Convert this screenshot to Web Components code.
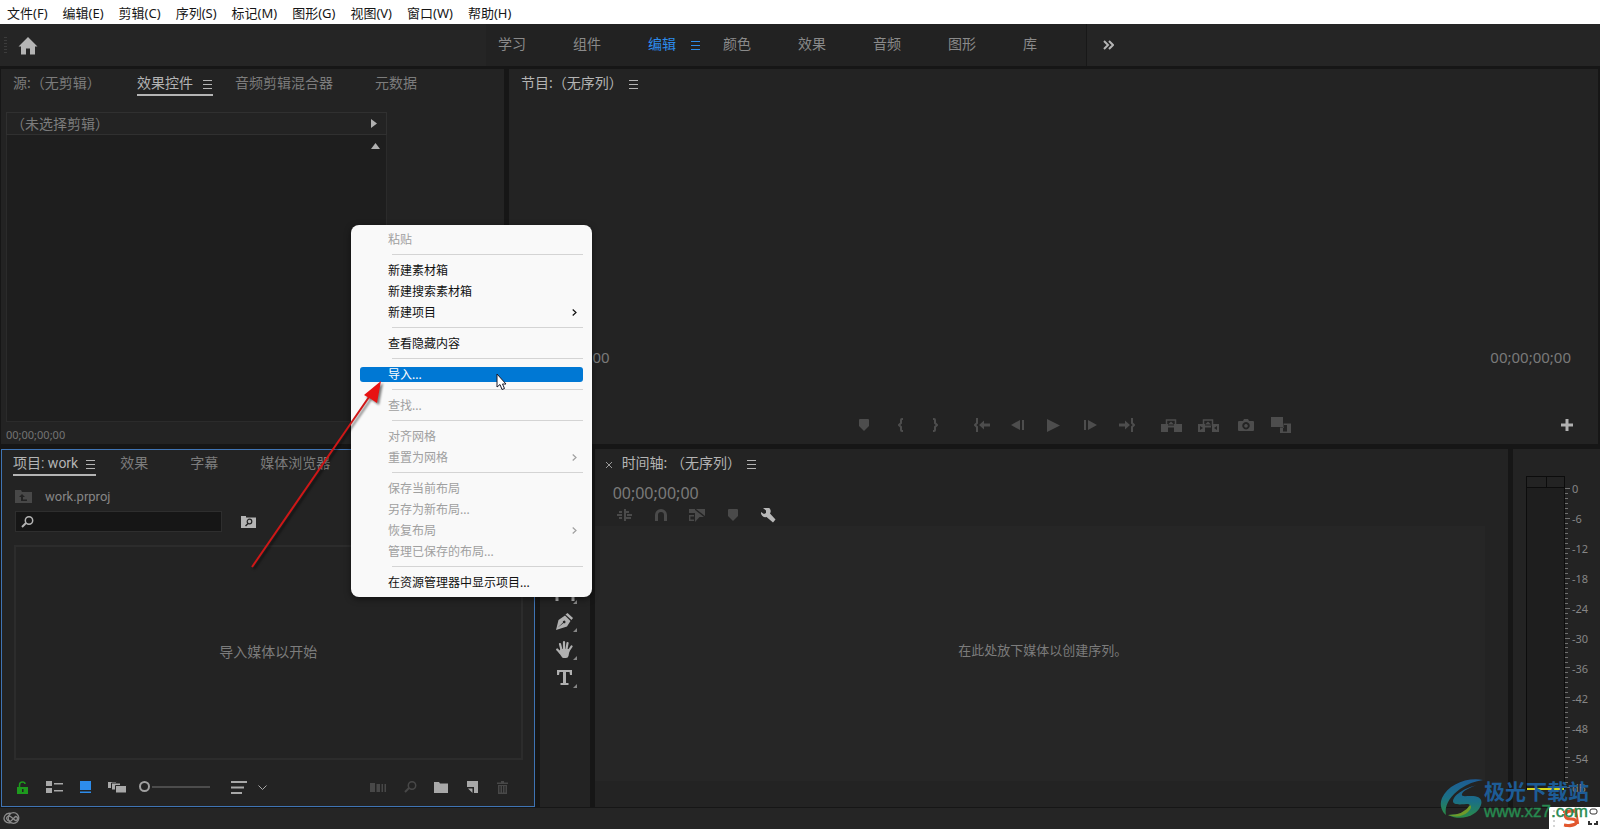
<!DOCTYPE html>
<html lang="zh-CN">
<head>
<meta charset="utf-8">
<title>work.prproj</title>
<style>
html,body{margin:0;height:100%;background:#161616;overflow:hidden}
body{font-family:"Noto Sans","Noto Sans CJK SC",sans-serif;font-size:14px;color:#868686}
</style>
</head>
<body>
<pr-app></pr-app>
<script>
const BASE = `*{box-sizing:border-box}
button{font:inherit;color:inherit;background:none;border:0;padding:0;margin:0;cursor:default;white-space:nowrap}
p{margin:0}`;
function define(name, css, html, setup){
  const t = document.createElement('template');
  t.innerHTML = `<style>${BASE}${css}</style>${html}`;
  customElements.define(name, class extends HTMLElement{
    constructor(){ super(); this.attachShadow({mode:'open'}).append(t.content.cloneNode(true)); }
    connectedCallback(){ if(setup && !this.ready){ this.ready = true; setup(this, this.shadowRoot); } }
  });
}

/* name: [width, height, markup] */
const ICONS = {
  home:[20,18,'<path d="M10 0 19.500 9.500H17V17.500H12V11.500H8V17.500H3V9.500H.5Z"/>'],
  ham:[9,9,'<path d="M0 0h9v1H0zM0 4h9v1H0zM0 8h9v1H0z"/>'],
  more:[11,10,'<path d="M1 1l4 4-4 4M6 1l4 4-4 4" fill="none" stroke="currentColor" stroke-width="2"/>'],
  right:[6,9,'<path d="M0 0 6 4.500 0 9Z"/>'],
  up:[9,6,'<path d="M0 6 4.500 0 9 6Z"/>'],
  marker:[10,12,'<path d="M0 1q0-1 1-1h8q1 0 1 1v6l-5 5-5-5z"/>'],
  inb:[6,14,'<path d="M5 1H4Q3 1 3 2V5L1 7 3 9V12Q3 13 4 13H5" fill="none" stroke="currentColor" stroke-width="2"/>'],
  outb:[6,14,'<path d="M1 1H2Q3 1 3 2V5L5 7 3 9V12Q3 13 2 13H1" fill="none" stroke="currentColor" stroke-width="2"/>'],
  goin:[16,14,'<path d="M4 1H3V5L1 7 3 9V13H4" fill="none" stroke="currentColor" stroke-width="2"/><path d="M5 7l5-4.500V5.500h6v3h-6v3z"/>'],
  goout:[16,14,'<path d="M12 1h1V5l2 2-2 2v4h-1" fill="none" stroke="currentColor" stroke-width="2"/><path d="M11 7 6 2.500V5.500H0v3h6v3z"/>'],
  back:[14,10,'<path d="M0 5 9 0v10zM11 0h2v10h-2z"/>'],
  fwd:[14,10,'<path d="M0 0h2v10H0zM4 0l9 5-9 5z"/>'],
  play:[13,13,'<path d="M0 0 13 6.500 0 13Z"/>'],
  lift:[21,13,'<path d="M0 5h7v8H0zM13 5h8v8h-8z"/><path d="M5.500 7V1h9v6" fill="none" stroke="currentColor" stroke-width="1.500"/><path d="M7 5.500 10 2.500l3 3zM7 6.500h6v2H7z"/>'],
  extract:[21,13,'<path fill-rule="evenodd" d="M0 5h7v8H0zM2 7v4l3-2zM14 5h7v8h-7zM19 7v4l-3-2z"/><path d="M5.500 7V1h9v6" fill="none" stroke="currentColor" stroke-width="1.500"/><path d="M7 5.500 10 2.500l3 3zM7 6.500h6v2H7z"/>'],
  camera:[16,12,'<path fill-rule="evenodd" d="M1 2h4l1-2h4l1 2h4q1 0 1 1v8q0 1-1 1H1q-1 0-1-1V3q0-1 1-1zM8 3a3.700 3.700 0 1 0 .01 0zM8 5a1.800 1.800 0 1 1-.01 0z"/>'],
  compare:[21,16,'<path d="M0 0h12v10H0z"/><path fill-rule="evenodd" d="M9 10.500h3.500V6.500H20V16H9zM12 11v3.500h4V8h-3v3z"/>'],
  plus:[12,12,'<path d="M4.500 0h3v4.500H12v3H7.500V12h-3V7.500H0v-3h4.500z"/>'],
  folderup:[17,13,'<path fill-rule="evenodd" d="M0 0h6l1 2h10v11H0zM7 4 4 7h2v4h6V9.500H8V7h2z"/>'],
  search:[13,12,'<circle cx="8" cy="4.500" r="3.700" fill="none" stroke="currentColor" stroke-width="1.500"/><path d="M5 7 1 11" stroke="currentColor" stroke-width="2"/>'],
  foldersearch:[15,12,'<path fill-rule="evenodd" d="M0 0h5v1.500h10V12H0z"/><circle cx="8.500" cy="5.500" r="2.300" fill="none" stroke="#222" stroke-width="1.200"/><path d="M7 7.500 4.500 10" stroke="#222" stroke-width="1.500"/>'],
  lock:[11,13,'<path fill-rule="evenodd" d="M0 6h11v7H0zM5 8v3h1.500V8z"/><path d="M2.500 6V4q0-3 3-3Q8 1 8 3" fill="none" stroke="currentColor" stroke-width="1.500"/>'],
  list:[17,12,'<path d="M0 0h6v5H0zM0 7h6v5H0zM8 2h9v1.500H8zM8 9h9v1.500H8z"/>'],
  iconview:[11,12,'<path d="M0 0h11v9H0zM0 10.500h11V12H0z"/>'],
  free:[20,12,'<g stroke="#232323"><path d="M.5.5h9v7h-9z"/><path d="M4.500 2h9v7h-9z"/><path d="M8.500 4.500h11V12h-11z"/></g>'],
  sort:[16,13,'<path d="M0 0h16v2H0zM0 5.500h13v2H0zM0 11h11v2H0z"/>'],
  down:[9,5,'<path d="M.5.5l4 4 4-4" fill="none" stroke="currentColor"/>'],
  auto:[16,9,'<path d="M0 0h5v9H0zM6.500 1H10v8H6.500zM11.500 1H13v8h-1.500zM14.500 1H16v8h-1.500z"/>'],
  folder:[14,11,'<path d="M0 0h5l1 1.500h8V11H0z"/>'],
  newitem:[11,12,'<path d="M0 0h11v12H7V6H0z"/><path d="M1 7.500h4.500V12z"/>'],
  trash:[11,13,'<path fill-rule="evenodd" d="M4 0h3v1.500h4V3H0V1.500h4zM1 4h9v9H1zM2.500 5v6.500H3.500V5zM5 5v6.500h1V5zM7.500 5v6.500h1V5z"/>'],
  snap:[15,12,'<path d="M0 5h5v2H0zM2 2h3v2H2zM2 8h3v2H2zM7 0h2v12H7zM10 5h5v2h-5zM9 2h3v2H9zM9 8h5v2H9z"/>'],
  magnet:[12,13,'<path d="M1.500 12V6a4.500 4.500 0 0 1 9 0v6" fill="none" stroke="currentColor" stroke-width="3"/>'],
  linked:[16,13,'<path d="M0 0h6v4H0zM7 0h9v7z"/><path d="M5 6.700H.7v4.600H5" fill="none" stroke="currentColor" stroke-width="1.400"/><path d="M6 1l9 7h-4.500L6 13z"/>'],
  wrench:[15,15,'<path d="M2 0a4.500 4.500 0 0 1 7 5.500l5.500 6-2.500 3L5.500 9A4.500 4.500 0 0 1 0 4l3 2 2-1V2.500z"/>'],
  close:[6,6,'<path d="M0 0l6 6M6 0 0 6" stroke="currentColor"/>'],
  rect:[20,20,'<path d="M2 18v-4M18 18v-4" fill="none" stroke="currentColor" stroke-width="3"/>'],
  pen:[18,17,'<path fill-rule="evenodd" d="M0 17 2.500 7 9 2.500 14.500 8 11 13.500zM1.500 14.700 7 9.500a1.300 1.300 0 1 1 .6.6z"/><path d="M9.500 1.500 11.500 0 17 5l-1.500 2z"/>'],
  hand:[17,17,'<g fill="none" stroke="currentColor" stroke-linecap="round" stroke-width="2.200"><path d="M5.500 9 4 3M8 8V1.200M10.500 8l1-5.800M12.500 10 15.500 5.500M4.500 12 1.200 8.500"/></g><path d="M4.500 8h8.300l.7 2-1 5q-.5 2-2.500 2H7.500q-1 0-2-1.500L2.500 11z"/>'],
  type:[15,15,'<path d="M0 0h15v5h-2L12.500 2H9v11h2.500v2h-8v-2H6V2H2.500L2 5H0z"/>'],
  cc:[17,12,'<g fill="none" stroke="currentColor" stroke-width="1.300"><circle cx="10.500" cy="6" r="5.300"/><path d="M8 1.500Q4 .5 2 3.500t0 5.500q2 2.500 6 1.500"/><path d="M3.500 6.500a2.500 2.500 0 0 1 4-2l5 4a2 2 0 1 0 0-4L8 9q-3 1-4.500-2.500"/></g>'],
  chev:[5,7,'<path d="M.7.5 4 3.500.7 6.500" fill="none" stroke="currentColor" stroke-width="1.200"/>']
};
customElements.define('pr-icon', class extends HTMLElement{
  constructor(){ super(); this.attachShadow({mode:'open'}); }
  connectedCallback(){
    const [w,h,m] = ICONS[this.getAttribute('name')];
    this.shadowRoot.innerHTML = `<style>:host{display:block;flex:none}svg{display:block}</style><svg width="${w}" height="${h}" viewBox="0 0 ${w} ${h}" fill="currentColor" aria-hidden="true">${m}</svg>`;
  }
});

define('pr-menubar', `:host{display:block;background:#fff;color:#161616;font-size:13px}
nav{display:flex;gap:15px;padding:0 7px;height:24px;align-items:center}
button{line-height:20px;padding-top:2px}`,
`<nav></nav>`, (el, r) => {
  r.querySelector('nav').innerHTML = ['文件(F)','编辑(E)','剪辑(C)','序列(S)','标记(M)','图形(G)','视图(V)','窗口(W)','帮助(H)'].map(t=>`<button>${t}</button>`).join('');
});

define('pr-workspaces', `:host{display:flex;height:42px;background:#252525;align-items:center}
.grip{width:3px;height:16px;margin-left:4px;background:repeating-linear-gradient(#3c3c3c 0 1px,transparent 1px 3px)}
.home{color:#b4b4b4;margin-left:11px;padding-top:1px}
.tabs{display:grid;grid-template-columns:repeat(7,75px) 63px;margin-left:448px;padding-left:12px;height:42px;background:#222;border-right:1px solid #181818}
.tabs button{text-align:left;padding-bottom:4px;color:#8a8a8a;display:flex;align-items:center;gap:15px}
.tabs .on{color:#2d8ceb}
.tabs pr-icon{padding-top:4px}
.more{color:#b4b4b4;margin-left:16px}`,
`<span class="grip"></span><button class="home" aria-label="主页"><pr-icon name="home"></pr-icon></button>
<div class="tabs"><button>学习</button><button>组件</button><button class="on">编辑<pr-icon name="ham"></pr-icon></button><button>颜色</button><button>效果</button><button>音频</button><button>图形</button><button>库</button></div>
<button class="more" aria-label="更多"><pr-icon name="more"></pr-icon></button>`);

define('pr-panel', `:host{display:flex;flex-direction:column;background:#232323;min-width:0;min-height:0;overflow:hidden}
:host([active]){border:1px solid #3f74b4}
header{display:flex;height:32px;align-items:flex-start;flex:none}
`, `<header><slot name="tab"></slot></header><slot></slot>`);

define('pr-tab', `:host{display:block;flex:none;color:#7c7c7c}
button{display:flex;align-items:center;height:24px;line-height:20px;gap:var(--tab-gap,10px);padding:1px 1px 1px 0;border-bottom:2px solid transparent}
pr-icon{visibility:hidden;padding-top:2px}
:host([on]){color:#b4b4b4}
:host([on]) pr-icon{visibility:visible}
:host([line]) button{border-color:#b4b4b4}
:host([bare]) pr-icon{display:none}`,
`<button role="tab"><slot></slot><pr-icon name="ham"></pr-icon></button>`);

define('pr-effects', `:host{display:flex;min-height:0;min-width:0}
pr-panel{flex:1}
pr-tab{margin:3px 22px 0 0}
pr-tab:first-of-type{margin-left:12px;width:102px}
.body{display:flex;flex-direction:column;flex:1;margin:11px 117px 0 5px}
.clip{height:23px;border:1px solid #303030;display:flex;align-items:center;justify-content:space-between;padding:0 9px 0 4px}
.clip p{color:#7c7c7c;padding-bottom:2px}.clip pr-icon,.well pr-icon{color:#b0b0b0}
.well{flex:1;background:#1e1e1e;border:1px solid #2b2b2b;border-top:0;padding:8px 6px;display:flex;justify-content:flex-end}
.time{font-size:11px;line-height:18px;padding:4px 0 0 5px;color:#747474}`,
`<pr-panel><pr-tab slot="tab" bare>源:（无剪辑）</pr-tab><pr-tab slot="tab" on line>效果控件</pr-tab><pr-tab slot="tab">音频剪辑混合器</pr-tab><pr-tab slot="tab">元数据</pr-tab>
<div class="body"><div class="clip"><p>（未选择剪辑）</p><pr-icon name="right"></pr-icon></div><div class="well"><pr-icon name="up"></pr-icon></div></div>
<p class="time">00;00;00;00</p></pr-panel>`);

define('pr-program', `:host{display:flex;min-height:0;min-width:0;--tab-gap:6px}
pr-panel{flex:1}pr-tab{margin:3px 0 0 12px}
.view{flex:1}
.times{display:flex;justify-content:space-between;padding:0 27px 0 20px;font-size:15px;line-height:20px;color:#7a7a7a}
.bar{display:grid;grid-template-columns:1fr auto 1fr;align-items:center;height:77px;padding:48px 25px 9px 0;color:#4d4d4d}
.icons{display:grid;grid-template-columns:36px 38px 30px 64px 8px 64px 10px 62px 28px 46px 28px 44px;justify-items:center;align-items:center;margin-left:67px}
.plus{justify-self:end;color:#b0b0b0}`,
`<pr-panel><pr-tab slot="tab" on>节目:（无序列）</pr-tab><div class="view"></div>
<div class="times"><span>00;00;00;00</span><span>00;00;00;00</span></div>
<div class="bar"><span></span><div class="icons"></div><button class="plus" aria-label="按钮编辑器"><pr-icon name="plus"></pr-icon></button></div></pr-panel>`,
(el, r) => {
  r.querySelector('.icons').innerHTML = [['marker','添加标记'],['inb','标记入点'],['outb','标记出点'],['goin','转到入点'],['back','后退一帧'],['play','播放'],['fwd','前进一帧'],['goout','转到出点'],['lift','提升'],['extract','提取'],['camera','导出帧'],['compare','比较视图']].map(([n,l])=>`<button aria-label="${l}"><pr-icon name="${n}"></pr-icon></button>`).join('');
});

define('pr-project', `:host{display:flex;min-height:0;min-width:0;--tab-gap:8px}
pr-panel{flex:1}pr-tab{margin:2px 24px 0 0;font-family:Roboto,"Noto Sans CJK SC",sans-serif}pr-tab:first-of-type{margin-left:11px}
.path{display:flex;align-items:center;gap:13px;padding-left:13px;height:26px;font:13px Roboto,sans-serif;color:#868686;margin-top:1px}
.path pr-icon{color:#484848}
.find{display:flex;align-items:center;gap:19px;padding-left:13px;height:25px;color:#b4b4b4}
.find label{display:flex;align-items:center;width:207px;height:21px;background:#161616;border:1px solid #2e2e2e;padding-left:5px}
.find input{flex:1;min-width:0;background:none;border:0;outline:0;color:#b4b4b4}
.drop{flex:1;border:2px solid #2c2c2c;margin:11px 11px 0 12px;display:flex;align-items:center;justify-content:center;color:#7c7c7c}
.drop p{padding-bottom:3px}
.tools{display:flex;align-items:center;height:46px;padding:8px 26px 0 15px;color:#a8a8a8}
.tools button,.tools input{flex:none}
.lock{color:#1e9a1e;margin-right:18px}.l{margin-right:17px}.v{color:#2d8ceb;margin-right:16px}.f{margin-right:12px}.s{margin:0 11px 0 21px}.sp{flex:1}
.dim{color:#484848}.fo{margin:0 19px 0 17px}.a{margin-right:18px}.n{margin-right:19px}
input[type=range]{appearance:none;background:none;width:71px;height:13px;margin:0}
input[type=range]::-webkit-slider-runnable-track{height:2px;background:linear-gradient(90deg,transparent 13px,#4c4c4c 13px)}
input[type=range]::-webkit-slider-thumb{appearance:none;width:11px;height:11px;margin-top:-5px;border:2px solid #a0a0a0;border-radius:50%;background:#232323}`,
`<pr-panel active><pr-tab slot="tab" on line>项目: work</pr-tab><pr-tab slot="tab">效果</pr-tab><pr-tab slot="tab">字幕</pr-tab><pr-tab slot="tab">媒体浏览器</pr-tab>
<div class="path"><pr-icon name="folderup"></pr-icon><span>work.prproj</span></div>
<div class="find"><label><pr-icon name="search"></pr-icon><input type="text" aria-label="搜索"></label><button aria-label="搜索素材箱"><pr-icon name="foldersearch"></pr-icon></button></div>
<div class="drop"><p>导入媒体以开始</p></div>
<div class="tools"><button class="lock" aria-label="锁定"><pr-icon name="lock"></pr-icon></button><button class="l" aria-label="列表视图"><pr-icon name="list"></pr-icon></button><button class="v" aria-label="图标视图"><pr-icon name="iconview"></pr-icon></button><button class="f" aria-label="自由视图"><pr-icon name="free"></pr-icon></button><input type="range" value="0" aria-label="缩放"><button class="s" aria-label="排序"><pr-icon name="sort"></pr-icon></button><button aria-label="排序选项"><pr-icon name="down"></pr-icon></button><span class="sp"></span><button class="dim a" aria-label="自动匹配序列"><pr-icon name="auto"></pr-icon></button><button class="dim" aria-label="查找"><pr-icon name="search"></pr-icon></button><button class="fo" aria-label="新建素材箱"><pr-icon name="folder"></pr-icon></button><button class="n" aria-label="新建项"><pr-icon name="newitem"></pr-icon></button><button class="dim" aria-label="清除"><pr-icon name="trash"></pr-icon></button></div></pr-panel>`);

define('pr-tools', `:host{display:flex;flex-direction:column;align-items:center;background:#232323;padding-top:130px;color:#b0b0b0;overflow:hidden}
button{width:24px;height:28px;flex:none;display:grid;place-items:center;position:relative}
button::after{content:"";position:absolute;right:0;bottom:3px;border:2px solid;border-color:transparent currentColor currentColor transparent;opacity:.7}`,
`<button aria-label="矩形工具"><pr-icon name="rect"></pr-icon></button><button aria-label="钢笔工具"><pr-icon name="pen"></pr-icon></button><button aria-label="手形工具"><pr-icon name="hand"></pr-icon></button><button aria-label="文字工具"><pr-icon name="type"></pr-icon></button>`);

define('pr-timeline', `:host{display:flex;min-height:0;min-width:0;--tab-gap:6px}
pr-panel{flex:1}.x{color:#9a9a9a;padding:13px 10px 0 11px}pr-tab{margin-top:3px}
.time{font-size:16px;line-height:22px;color:#7a7a7a;padding:1px 0 0 18px}
.icons{display:grid;grid-template-columns:repeat(5,36px);justify-items:center;align-items:center;height:22px;padding-left:12px;color:#4a4a4a}
.w{color:#b8b8b8}
.track{flex:1;display:flex;align-items:center;justify-content:center;margin:0 23px 26px 0;padding:0 0 8px 6px;background:#262626;color:#7c7c7c;font-size:13px}`,
`<pr-panel><button class="x" slot="tab" aria-label="关闭"><pr-icon name="close"></pr-icon></button><pr-tab slot="tab" on>时间轴: （无序列）</pr-tab>
<p class="time">00;00;00;00</p>
<div class="icons"><button aria-label="插入嵌套"><pr-icon name="snap"></pr-icon></button><button aria-label="对齐"><pr-icon name="magnet"></pr-icon></button><button aria-label="链接选择"><pr-icon name="linked"></pr-icon></button><button aria-label="标记"><pr-icon name="marker"></pr-icon></button><button class="w" aria-label="设置"><pr-icon name="wrench"></pr-icon></button></div>
<div class="track"><p>在此处放下媒体以创建序列。</p></div></pr-panel>`);

define('pr-meters', `:host{display:flex;background:#232323;padding:24px 0 4px 13px;font-size:11px;color:#868686}
.bar{width:39px;margin:3px 0 13px;border:1px solid #0c0c0c;border-bottom:0;background:#1e1e1e;display:flex;flex-direction:column}
.clip{height:11px;background:#232323;border-bottom:1px solid #0c0c0c;display:grid;grid-template-columns:1fr 1fr}
.clip i+i{border-left:1px solid #0c0c0c}
.low{margin-top:auto;height:2px;background:#d8d81c}
.ticks{width:5px;margin:15px 0;display:flex;flex-direction:column}
.ticks i{flex:1;width:3px;border-top:1px solid #707070}
.ticks i:nth-child(6n+1){width:5px}
.ticks i:last-child{flex:none;height:1px}
.lab{display:flex;flex-direction:column;margin-left:2px}
.lab span{flex:1;display:flex;align-items:center}`,
`<div class="bar"><div class="clip"><i></i><i></i></div><div class="low"></div></div><div class="ticks"></div><div class="lab"></div>`,
(el, r) => {
  r.querySelector('.ticks').innerHTML = '<i></i>'.repeat(61);
  r.querySelector('.lab').innerHTML = ['0','-6','-12','-18','-24','-30','-36','-42','-48','-54','dB'].map(t=>`<span>${t}</span>`).join('');
});

define('pr-menu', `:host{display:block;background:#f9f9f9;color:#111;border-radius:8px;padding:4px 9px;width:241px;font-size:12px;box-shadow:0 2px 6px rgba(0,0,0,.5)}
div,section{display:flex;flex-direction:column}
button{display:flex;height:21px;padding:0 6px 0 28px;justify-content:space-between;align-items:center}
button span{line-height:15px}
button:disabled{color:#a0a0a0}
button.on{height:15px;margin:3px 0;background:#0078d4;color:#fff;border-radius:3px}
hr{border:0;height:1px;flex:none;width:191px;margin:4px 0 5px 32px;background:#d4d4d4}`,
`<div role="menu"></div>`, (el, r) => {
  const groups = [['~粘贴'],['新建素材箱','新建搜索素材箱','新建项目>'],['查看隐藏内容'],['*导入...'],['~查找...'],['~对齐网格','~重置为网格>'],['~保存当前布局','~另存为新布局...','~恢复布局>','~管理已保存的布局...'],['在资源管理器中显示项目...']];
  r.querySelector('div').innerHTML = groups.map(g=>'<section role="group">'+g.map(t=>`<button role="menuitem"${t[0]=='~'?' disabled':''}${t[0]=='*'?' class="on"':''}><span>${t.replace(/[~*>]/g,'')}</span>${t.endsWith('>')?'<pr-icon name="chev"></pr-icon>':''}</button>`).join('')+'</section>').join('<hr>');
});

define('pr-watermark', `:host{display:grid;grid-template-columns:43px auto;align-items:center;column-gap:1px}
.a{color:#1d5c96;font:700 21px/26px "Noto Sans CJK SC",sans-serif}
.b{color:#278a50;font:17px/18px "Liberation Sans",sans-serif;-webkit-text-stroke:.4px #278a50}
svg{display:block}`,
`<svg width="43" height="40" viewBox="0 0 43 40" aria-hidden="true"><defs><linearGradient id="g" x1="0" y1="0" x2="0" y2="1"><stop offset="0" stop-color="#1d5c96"/><stop offset=".5" stop-color="#1b6f86"/><stop offset="1" stop-color="#2a8c46"/></linearGradient></defs>
<path fill="url(#g)" d="M43 1C26-2 8 6 2 19c-3 7 0 14 4 17C4 27 10 17 20 10 27 5 35 2 43 1z"/>
<path fill="url(#g)" d="M38 6C27 8 14 15 13 22c0 5 10 3 15 3 5 1 0 7-9 10l-11 1c14 7 30 0 33-10 2-7-3-9-10-9-6 0-10 1-9-2 1-3 8-7 16-9z"/><path fill="#6f9a2a" d="M8 36q16 0 22-10 3 2-2 7-8 7-20 3z"/></svg>
<div><div class="a">极光下载站</div><div class="b">www.xz7.com</div></div>`);

define('pr-tray', `:host{display:block;width:51px;height:22px;background:#fff;overflow:hidden}`,
`<svg width="51" height="22" viewBox="0 0 51 22" aria-hidden="true"><path d="M5 3v18" stroke="#aaa" stroke-dasharray="2 3"/><path d="M28 5Q18 2 16 8q0 4 6 4t5 4-12 2" fill="none" stroke="#e2572e" stroke-width="3"/><path d="M14 5 27 3l2 13-13 3" fill="none" stroke="#e2572e" stroke-width="2"/><rect x="41" y="2" width="7" height="5" rx="2" fill="none" stroke="#333"/><path d="M40 14v3h3M45 17h3v-3" fill="none" stroke="#333" stroke-width="2"/></svg>`);

define('pr-app', `:host{display:grid;grid-template-rows:24px 42px minmax(0,1fr) 21px;height:100vh;position:relative;overflow:hidden}
main{display:grid;grid-template-rows:376fr 358fr;gap:5px;padding:3px 2px 1px 1px;min-height:0}
.top{display:grid;grid-template-columns:503fr 1089fr;gap:5px;min-height:0}
.bottom{display:grid;grid-template-columns:534fr 50px 914fr 87px;column-gap:5px;min-height:0;margin-right:-2px}
footer{background:#252525;color:#8c8c8c;padding:0 3px 1px;display:flex;align-items:center}
pr-menu{position:absolute;left:351px;top:225px}
pr-watermark{position:absolute;right:11px;bottom:8px}
pr-tray{position:absolute;right:0;bottom:0}
.arrow{position:absolute;left:245px;top:374px}
.cursor{position:absolute;left:496px;top:373px}`,
`<pr-menubar></pr-menubar><pr-workspaces></pr-workspaces>
<main><div class="top"><pr-effects></pr-effects><pr-program></pr-program></div>
<div class="bottom"><pr-project></pr-project><pr-tools></pr-tools><pr-timeline></pr-timeline><pr-meters></pr-meters></div></main>
<footer><pr-icon name="cc"></pr-icon></footer>
<pr-menu></pr-menu>
<svg class="arrow" width="145" height="200" viewBox="0 0 145 200" aria-hidden="true"><g style="filter:drop-shadow(2px 2px 1px rgba(0,0,0,.5))"><path d="M7 193 124 23" stroke="#cf1717" stroke-width="2"/><path d="M136 7 132 29 126 25 119 21z" fill="#e81212"/></g></svg>
<svg class="cursor" width="12" height="18" viewBox="0 0 12 18" aria-hidden="true"><path d="M1 1v13l3-2.500 2 5 2.500-1-2-4.500H10z" fill="#fff" stroke="#1a1a2a"/></svg>
<pr-tray></pr-tray><pr-watermark></pr-watermark>`);
</script>
</body>
</html>
